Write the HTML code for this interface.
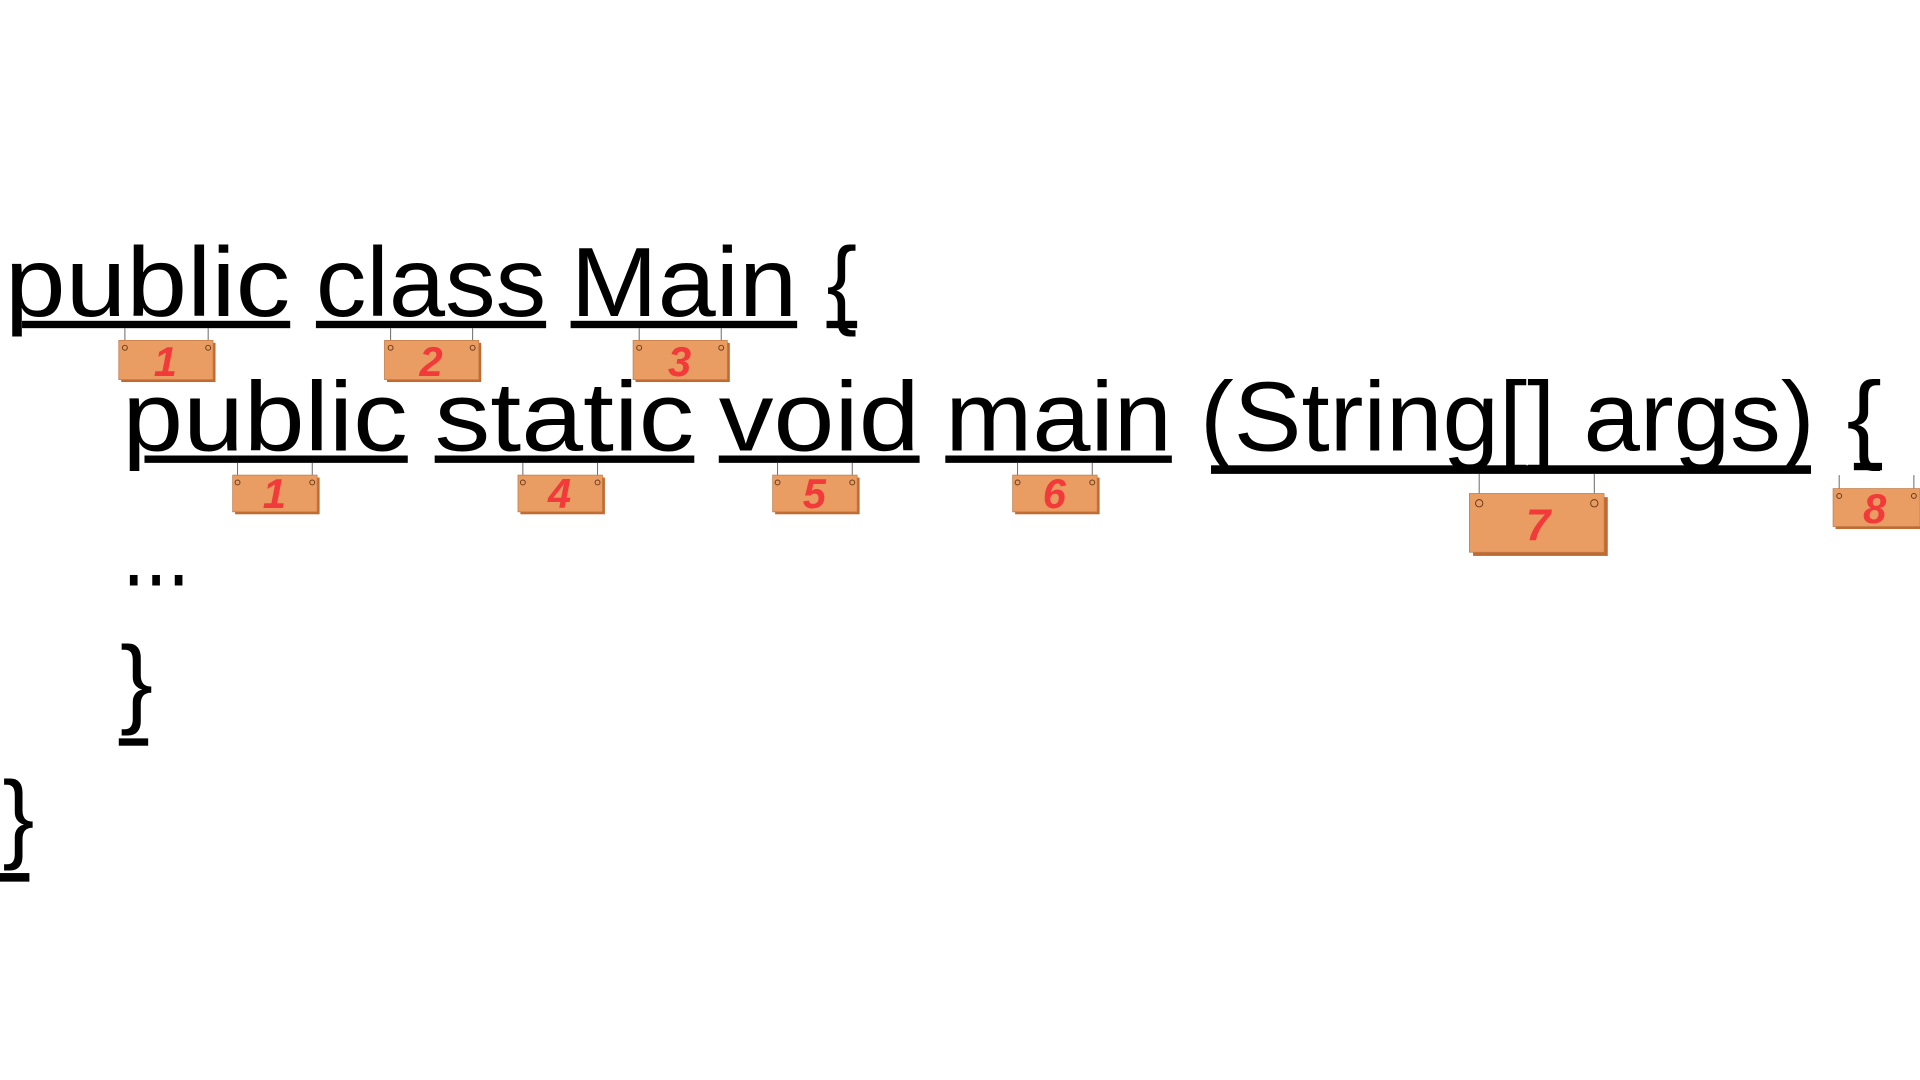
<!DOCTYPE html>
<html><head><meta charset="utf-8"><style>html,body{margin:0;padding:0;background:#fff;}svg{display:block}</style></head>
<body>
<svg width="1920" height="1080" viewBox="0 0 1568 882" xmlns="http://www.w3.org/2000/svg">
<rect width="1568" height="882" fill="#fff"/>
<g font-family="Liberation Sans, sans-serif" font-size="80" fill="#000">
<text x="4" y="258" textLength="233" lengthAdjust="spacingAndGlyphs">public</text>
<text x="258" y="258" textLength="188" lengthAdjust="spacingAndGlyphs">class</text>
<text x="466" y="258" textLength="185" lengthAdjust="spacingAndGlyphs">Main</text>
<text x="675" y="258" textLength="25" lengthAdjust="spacingAndGlyphs">{</text>
<text x="100" y="368" textLength="233" lengthAdjust="spacingAndGlyphs">public</text>
<text x="355" y="368" textLength="212" lengthAdjust="spacingAndGlyphs">static</text>
<text x="587" y="368" textLength="164" lengthAdjust="spacingAndGlyphs">void</text>
<text x="772" y="368" textLength="185" lengthAdjust="spacingAndGlyphs">main</text>
<text x="980" y="368" textLength="502" lengthAdjust="spacingAndGlyphs">(String[] args)</text>
<text x="1508" y="368" textLength="29" lengthAdjust="spacingAndGlyphs">{</text>
<text x="100" y="478" textLength="55" lengthAdjust="spacingAndGlyphs">...</text>
<text x="98" y="584" textLength="27" lengthAdjust="spacingAndGlyphs">}</text>
<text x="2" y="694" textLength="26" lengthAdjust="spacingAndGlyphs">}</text>
</g>
<g fill="#000">
<rect x="18" y="262" width="219" height="6"/>
<rect x="258" y="262" width="188" height="6"/>
<rect x="466" y="262" width="185" height="6"/>
<rect x="675" y="262" width="25" height="6"/>
<rect x="118" y="372" width="215" height="6"/>
<rect x="355" y="372" width="212" height="6"/>
<rect x="587" y="372" width="164" height="6"/>
<rect x="772" y="372" width="185" height="6"/>
<rect x="989" y="380" width="490" height="7"/>
<rect x="1514" y="378" width="23" height="6"/>
<rect x="97" y="603" width="24" height="6"/>
<rect x="0" y="713" width="24" height="7"/>
</g>
<g stroke="#666" stroke-width="0.8">
<line x1="102" y1="268" x2="102" y2="283"/><line x1="170" y1="268" x2="170" y2="283"/>
<line x1="319" y1="268" x2="319" y2="283"/><line x1="386" y1="268" x2="386" y2="283"/>
<line x1="522" y1="268" x2="522" y2="283"/><line x1="589" y1="268" x2="589" y2="283"/>
<line x1="194" y1="378" x2="194" y2="393"/><line x1="255" y1="378" x2="255" y2="393"/>
<line x1="427" y1="378" x2="427" y2="393"/><line x1="488" y1="378" x2="488" y2="393"/>
<line x1="635" y1="378" x2="635" y2="393"/><line x1="696" y1="378" x2="696" y2="393"/>
<line x1="831" y1="378" x2="831" y2="393"/><line x1="892" y1="378" x2="892" y2="393"/>
<line x1="1208" y1="387" x2="1208" y2="411"/><line x1="1302" y1="387" x2="1302" y2="411"/>
<line x1="1502" y1="388" x2="1502" y2="405"/><line x1="1563" y1="388" x2="1563" y2="405"/>
</g>
<g font-family="Liberation Sans, sans-serif" font-weight="bold" font-style="italic" fill="#f23a3a" text-anchor="middle">
<rect x="99" y="280" width="77" height="32" fill="#c06a33"/><rect x="97" y="278" width="77" height="32" fill="#e99d63" stroke="#c47a45" stroke-width="0.6"/>
<text x="135" y="307" font-size="34">1</text>
<rect x="316" y="280" width="77" height="32" fill="#c06a33"/><rect x="314" y="278" width="77" height="32" fill="#e99d63" stroke="#c47a45" stroke-width="0.6"/>
<text x="352" y="307" font-size="34">2</text>
<rect x="519" y="280" width="77" height="32" fill="#c06a33"/><rect x="517" y="278" width="77" height="32" fill="#e99d63" stroke="#c47a45" stroke-width="0.6"/>
<text x="555" y="307" font-size="34">3</text>
<rect x="192" y="390" width="69" height="30" fill="#c06a33"/><rect x="190" y="388" width="69" height="30" fill="#e99d63" stroke="#c47a45" stroke-width="0.6"/>
<text x="224" y="415" font-size="34">1</text>
<rect x="425" y="390" width="69" height="30" fill="#c06a33"/><rect x="423" y="388" width="69" height="30" fill="#e99d63" stroke="#c47a45" stroke-width="0.6"/>
<text x="457" y="415" font-size="34">4</text>
<rect x="633" y="390" width="69" height="30" fill="#c06a33"/><rect x="631" y="388" width="69" height="30" fill="#e99d63" stroke="#c47a45" stroke-width="0.6"/>
<text x="665" y="415" font-size="34">5</text>
<rect x="829" y="390" width="69" height="30" fill="#c06a33"/><rect x="827" y="388" width="69" height="30" fill="#e99d63" stroke="#c47a45" stroke-width="0.6"/>
<text x="861" y="415" font-size="34">6</text>
<rect x="1203" y="406" width="110" height="48" fill="#c06a33"/><rect x="1200" y="403" width="110" height="48" fill="#e99d63" stroke="#c47a45" stroke-width="0.6"/>
<text x="1256" y="441" font-size="36">7</text>
<rect x="1499" y="401" width="71" height="31" fill="#c06a33"/><rect x="1497" y="399" width="71" height="31" fill="#e99d63" stroke="#c47a45" stroke-width="0.6"/>
<text x="1531" y="427" font-size="34">8</text>
</g>
<g fill="none" stroke="#6a3a1a" stroke-width="0.8">
<circle cx="102" cy="284" r="2"/><circle cx="170" cy="284" r="2"/>
<circle cx="319" cy="284" r="2"/><circle cx="386" cy="284" r="2"/>
<circle cx="522" cy="284" r="2"/><circle cx="589" cy="284" r="2"/>
<circle cx="194" cy="394" r="2"/><circle cx="255" cy="394" r="2"/>
<circle cx="427" cy="394" r="2"/><circle cx="488" cy="394" r="2"/>
<circle cx="635" cy="394" r="2"/><circle cx="696" cy="394" r="2"/>
<circle cx="831" cy="394" r="2"/><circle cx="892" cy="394" r="2"/>
<circle cx="1208" cy="411" r="3"/><circle cx="1302" cy="411" r="3"/>
<circle cx="1502" cy="405" r="2"/><circle cx="1563" cy="405" r="2"/>
</g>
</svg>
</body></html>
